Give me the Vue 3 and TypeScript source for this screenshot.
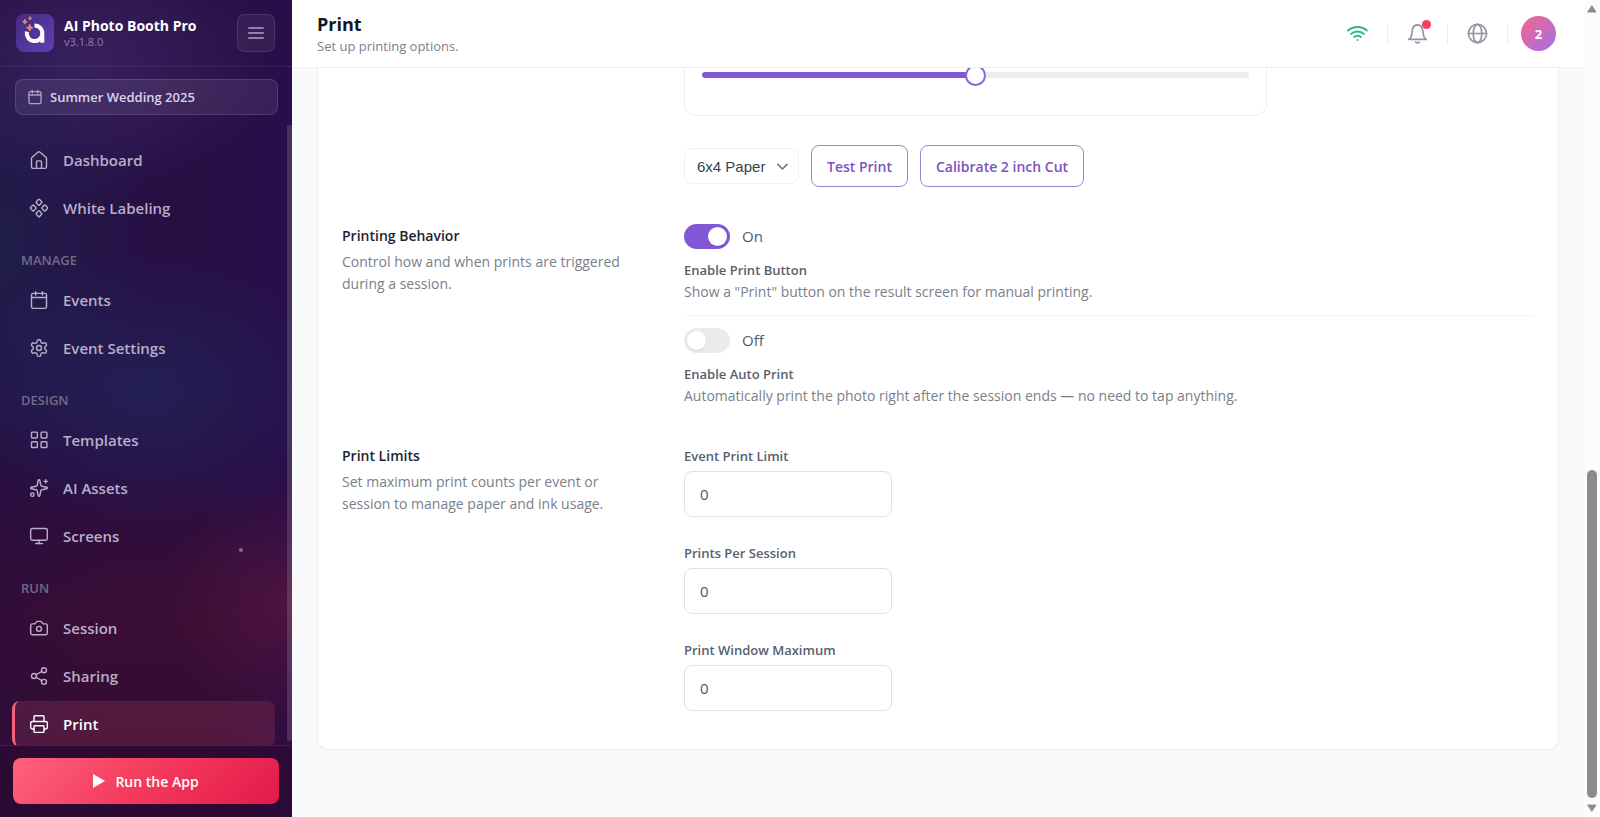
<script setup lang="ts">
import { ref } from 'vue'

interface NavItem {
  label: string
  paths: string[]
}
interface NavGroup {
  title?: string
  items: NavItem[]
}

const calendar = ['M8 2v4', 'M16 2v4', 'M5 4h14a2 2 0 0 1 2 2v14a2 2 0 0 1-2 2H5a2 2 0 0 1-2-2V6a2 2 0 0 1 2-2z', 'M3 9h18']

const groups: NavGroup[] = [
  {
    items: [
      { label: 'Dashboard', paths: ['M3 10.2a2 2 0 0 1 .7-1.5l7-6a2 2 0 0 1 2.6 0l7 6a2 2 0 0 1 .7 1.5V20a2 2 0 0 1-2 2H5a2 2 0 0 1-2-2z', 'M9 22v-8a1 1 0 0 1 1-1h4a1 1 0 0 1 1 1v8'] },
      { label: 'White Labeling', paths: [
        'M11.3 1.9a1 1 0 0 1 1.4 0l2.5 2.5a1 1 0 0 1 0 1.4l-2.5 2.5a1 1 0 0 1-1.4 0L8.8 5.8a1 1 0 0 1 0-1.4z',
        'M11.3 15.7a1 1 0 0 1 1.4 0l2.5 2.5a1 1 0 0 1 0 1.4l-2.5 2.5a1 1 0 0 1-1.4 0l-2.5-2.5a1 1 0 0 1 0-1.4z',
        'M4.4 8.8a1 1 0 0 1 1.4 0l2.5 2.5a1 1 0 0 1 0 1.4l-2.5 2.5a1 1 0 0 1-1.4 0l-2.5-2.5a1 1 0 0 1 0-1.4z',
        'M18.2 8.8a1 1 0 0 1 1.4 0l2.5 2.5a1 1 0 0 1 0 1.4l-2.5 2.5a1 1 0 0 1-1.4 0l-2.5-2.5a1 1 0 0 1 0-1.4z',
      ] },
    ],
  },
  {
    title: 'MANAGE',
    items: [
      { label: 'Events', paths: calendar },
      { label: 'Event Settings', paths: [
        'M12.22 2h-.44a2 2 0 0 0-2 2v.18a2 2 0 0 1-1 1.73l-.43.25a2 2 0 0 1-2 0l-.15-.08a2 2 0 0 0-2.73.73l-.22.38a2 2 0 0 0 .73 2.73l.15.1a2 2 0 0 1 1 1.72v.51a2 2 0 0 1-1 1.74l-.15.09a2 2 0 0 0-.73 2.73l.22.38a2 2 0 0 0 2.73.73l.15-.08a2 2 0 0 1 2 0l.43.25a2 2 0 0 1 1 1.73V20a2 2 0 0 0 2 2h.44a2 2 0 0 0 2-2v-.18a2 2 0 0 1 1-1.73l.43-.25a2 2 0 0 1 2 0l.15.08a2 2 0 0 0 2.73-.73l.22-.39a2 2 0 0 0-.73-2.73l-.15-.08a2 2 0 0 1-1-1.74v-.5a2 2 0 0 1 1-1.74l.15-.09a2 2 0 0 0 .73-2.73l-.22-.38a2 2 0 0 0-2.73-.73l-.15.08a2 2 0 0 1-2 0l-.43-.25a2 2 0 0 1-1-1.73V4a2 2 0 0 0-2-2z',
        'M9 12a3 3 0 1 0 6 0a3 3 0 1 0-6 0',
      ] },
    ],
  },
  {
    title: 'DESIGN',
    items: [
      { label: 'Templates', paths: [
        'M4 2.500h5a1 1 0 0 1 1 1v5a1 1 0 0 1-1 1H4a1 1 0 0 1-1-1v-5a1 1 0 0 1 1-1z',
        'M15.500 2.500h5a1 1 0 0 1 1 1v5a1 1 0 0 1-1 1h-5a1 1 0 0 1-1-1v-5a1 1 0 0 1 1-1z',
        'M15.500 14h5a1 1 0 0 1 1 1v5a1 1 0 0 1-1 1h-5a1 1 0 0 1-1-1v-5a1 1 0 0 1 1-1z',
        'M4 14h5a1 1 0 0 1 1 1v5a1 1 0 0 1-1 1H4a1 1 0 0 1-1-1v-5a1 1 0 0 1 1-1z',
      ] },
      { label: 'AI Assets', paths: ['M11.017 2.814a1 1 0 0 1 1.966 0l1.051 5.558a2 2 0 0 0 1.594 1.594l5.558 1.051a1 1 0 0 1 0 1.966l-5.558 1.051a2 2 0 0 0-1.594 1.594l-1.051 5.558a1 1 0 0 1-1.966 0l-1.051-5.558a2 2 0 0 0-1.594-1.594l-5.558-1.051a1 1 0 0 1 0-1.966l5.558-1.051a2 2 0 0 0 1.594-1.594z', 'M20 2v4', 'M22 4h-4', 'M2 20a2 2 0 1 0 4 0a2 2 0 1 0-4 0'] },
      { label: 'Screens', paths: ['M4 3h16a2 2 0 0 1 2 2v10a2 2 0 0 1-2 2H4a2 2 0 0 1-2-2V5a2 2 0 0 1 2-2z', 'M8 21h8', 'M12 17v4'] },
    ],
  },
  {
    title: 'RUN',
    items: [
      { label: 'Session', paths: ['M14.500 4h-5L7 7H4a2 2 0 0 0-2 2v9a2 2 0 0 0 2 2h16a2 2 0 0 0 2-2V9a2 2 0 0 0-2-2h-3z', 'M9 13a3 3 0 1 0 6 0a3 3 0 1 0-6 0'] },
      { label: 'Sharing', paths: ['M15 5a3 3 0 1 0 6 0a3 3 0 1 0-6 0', 'M3 12a3 3 0 1 0 6 0a3 3 0 1 0-6 0', 'M15 19a3 3 0 1 0 6 0a3 3 0 1 0-6 0', 'M8.590 13.510l6.830 3.980', 'M15.410 6.510l-6.820 3.980'] },
      { label: 'Print', paths: ['M6 18H4a2 2 0 0 1-2-2v-5a2 2 0 0 1 2-2h16a2 2 0 0 1 2 2v5a2 2 0 0 1-2 2h-2', 'M6 9V3a1 1 0 0 1 1-1h10a1 1 0 0 1 1 1v6', 'M7 14h10a1 1 0 0 1 1 1v6a1 1 0 0 1-1 1H7a1 1 0 0 1-1-1v-6a1 1 0 0 1 1-1z'] },
    ],
  },
]

const active = ref('Print')
const scale = ref(50)
const paper = ref('6x4 Paper')

const toggles = ref([
  { id: 'print-button', label: 'Enable Print Button', text: 'Show a "Print" button on the result screen for manual printing.', on: true },
  { id: 'auto-print', label: 'Enable Auto Print', text: 'Automatically print the photo right after the session ends — no need to tap anything.', on: false },
])

const limits = ref([
  { id: 'event-limit', label: 'Event Print Limit', value: '0' },
  { id: 'session-limit', label: 'Prints Per Session', value: '0' },
  { id: 'window-limit', label: 'Print Window Maximum', value: '0' },
])
</script>

<template>
  <div class="app">
    <aside class="sidebar">
      <div class="brand">
        <svg class="logo" viewBox="0 0 38 38" aria-hidden="true">
          <defs>
            <linearGradient id="logo-bg" x1="0" y1="0" x2="1" y2="1">
              <stop offset="0" stop-color="#452b80" />
              <stop offset="1" stop-color="#5f3fb4" />
            </linearGradient>
          </defs>
          <rect class="logo-tile" width="38" height="38" rx="8" />
          <path class="logo-ring" d="M18.500 11.500a7.800 7.800 0 1 1-7.600 6.200M26.300 19.300v9.400" />
          <path class="logo-star" d="M13.800 10.600l1 2.200 2.200 1-2.200 1-1 2.200-1-2.200-2.200-1 2.200-1zM8.800 5.500l.7 1.600 1.600.7-1.600.7-.7 1.600-.7-1.600-1.600-.7 1.600-.7zM14 2.900l.5 1 1 .5-1 .5-.5 1-.5-1-1-.5 1-.5z" />
        </svg>
        <div class="brand-text">
          <strong>AI Photo Booth Pro</strong>
          <span>v3.1.8.0</span>
        </div>
        <button class="menu" type="button" aria-label="Toggle menu">
          <svg viewBox="0 0 18 18"><path d="M2 4h14M2 9h14M2 14h14" /></svg>
        </button>
      </div>

      <button class="event" type="button">
        <svg viewBox="0 0 24 24"><path v-for="p in calendar" :key="p" :d="p" /></svg>
        <span>Summer Wedding 2025</span>
      </button>

      <nav class="nav">
        <div v-for="(group, i) in groups" :key="i" class="group">
          <h2 v-if="group.title">{{ group.title }}</h2>
          <a
            v-for="item in group.items"
            :key="item.label"
            href="#"
            :class="{ active: item.label === active }"
            @click.prevent="active = item.label"
          >
            <svg viewBox="0 0 24 24"><path v-for="p in item.paths" :key="p" :d="p" /></svg>
            <span>{{ item.label }}</span>
          </a>
        </div>
        <span class="nav-thumb"></span>
        <span class="spark"></span>
      </nav>

      <div class="run">
        <button type="button">
          <svg viewBox="0 0 12 14"><path d="M0 0l12 7-12 7z" /></svg>
          <span>Run the App</span>
        </button>
      </div>
    </aside>

    <div class="main">
      <header class="topbar">
        <div class="heading">
          <h1>Print</h1>
          <p>Set up printing options.</p>
        </div>
        <div class="actions">
          <button type="button" class="wifi" aria-label="Network">
            <svg viewBox="0 0 22 18">
              <path d="M1.200 5.800a15 15 0 0 1 19.600 0M4.300 9.300a10.500 10.500 0 0 1 13.400 0M7.500 12.600a5.700 5.700 0 0 1 7 0" />
              <circle cx="11" cy="15.800" r="1" />
            </svg>
          </button>
          <button type="button" class="bell" aria-label="Notifications">
            <svg viewBox="0 0 22 22">
              <path d="M1.800 17.200c2-1.200 3-3 3.200-6.200C5.200 6 6.500 2 11 2s5.800 4 6 9c.2 3.200 1.200 5 3.200 6.200zM9 20c1 1 3 1 4 0" />
            </svg>
            <span class="dot"></span>
          </button>
          <button type="button" aria-label="Language">
            <svg viewBox="0 0 22 22">
              <circle cx="11" cy="11" r="9.500" />
              <ellipse cx="11" cy="11" rx="4.500" ry="9.500" />
              <path d="M1.500 11h19" />
            </svg>
          </button>
          <button type="button" class="avatar">2</button>
        </div>
      </header>

      <main class="content">
        <div class="card">
          <section class="row">
            <div class="side"></div>
            <div class="body">
              <div class="slider-box">
                <input v-model="scale" type="range" min="0" max="100" aria-label="Print scale" />
              </div>
              <div class="tools">
                <div class="select">
                  <select v-model="paper" aria-label="Paper size">
                    <option>6x4 Paper</option>
                  </select>
                  <svg viewBox="0 0 12 8"><path d="M1 1.500l5 5 5-5" /></svg>
                </div>
                <button type="button">Test Print</button>
                <button type="button">Calibrate 2 inch Cut</button>
              </div>
            </div>
          </section>

          <section class="row">
            <div class="side">
              <h3>Printing Behavior</h3>
              <p>Control how and when prints are triggered during a session.</p>
            </div>
            <div class="body">
              <div v-for="t in toggles" :key="t.id" class="toggle">
                <div class="switch">
                  <input :id="t.id" v-model="t.on" type="checkbox" role="switch" />
                  <span>{{ t.on ? 'On' : 'Off' }}</span>
                </div>
                <label :for="t.id">{{ t.label }}</label>
                <p>{{ t.text }}</p>
              </div>
            </div>
          </section>

          <section class="row">
            <div class="side">
              <h3>Print Limits</h3>
              <p>Set maximum print counts per event or session to manage paper and ink usage.</p>
            </div>
            <div class="body limits">
              <div v-for="l in limits" :key="l.id" class="field">
                <label :for="l.id">{{ l.label }}</label>
                <input :id="l.id" v-model="l.value" type="text" inputmode="numeric" />
              </div>
            </div>
          </section>
        </div>
      </main>
    </div>

    <div class="scrollbar" aria-hidden="true">
      <svg viewBox="0 0 10 8"><path d="M5 1l4 6H1z" /></svg>
      <div class="track"><span></span></div>
      <svg viewBox="0 0 10 8"><path d="M5 7l4-6H1z" /></svg>
    </div>
  </div>
</template>

<style>
body {
  margin: 0;
}
</style>

<style scoped>
* {
  box-sizing: border-box;
}
.app {
  display: flex;
  height: 100vh;
  overflow: hidden;
  font-family: 'Open Sans', 'Noto Sans', sans-serif;
  background: #f9fafc;
  color: #374151;
}
h1, h2, h3, p {
  margin: 0;
}
button {
  font-family: inherit;
  cursor: pointer;
}
svg {
  display: block;
  fill: none;
  stroke: currentColor;
  stroke-linecap: round;
  stroke-linejoin: round;
}

/* Sidebar */
.sidebar {
  flex: none;
  width: 292px;
  display: flex;
  flex-direction: column;
  color: #b9adc9;
  background:
    radial-gradient(ellipse 130px 120px at 100% 74%, rgba(110, 28, 62, 0.42), transparent),
    radial-gradient(ellipse 200px 140px at 50% 48%, rgba(32, 46, 98, 0.55), transparent),
    radial-gradient(ellipse 150px 230px at 0 30%, rgba(28, 40, 82, 0.6), transparent),
    radial-gradient(ellipse 190px 130px at 28% 8%, rgba(66, 42, 112, 0.65), transparent),
    linear-gradient(90deg, rgba(38, 14, 62, 0.4), transparent 40%, transparent 70%, rgba(42, 14, 88, 0.35)),
    linear-gradient(180deg, #281044 0, #270f45 45%, #2a0d42 58%, #3a0d35 75%, #300b32 100%);
}
.brand {
  display: flex;
  align-items: center;
  gap: 10px;
  height: 67px;
  padding: 0 17px 0 16px;
  border-bottom: 1px solid rgba(255, 255, 255, 0.07);
}
.logo {
  width: 38px;
  height: 38px;
  stroke: none;
}
.logo-tile {
  fill: url(#logo-bg);
}
.logo-ring {
  stroke: #fff;
  stroke-width: 4;
  stroke-linecap: butt;
}
.logo-star {
  fill: #e98a5c;
  stroke: #e98a5c;
  stroke-width: 1;
}
.brand-text {
  flex: 1;
  display: flex;
  flex-direction: column;
}
.brand-text strong {
  font-size: 14px;
  line-height: 18px;
  font-weight: 700;
  color: #fff;
  white-space: nowrap;
}
.brand-text span {
  font-size: 11px;
  line-height: 14px;
  color: #8f80a5;
}
.menu {
  width: 38px;
  height: 38px;
  display: grid;
  place-items: center;
  padding: 0;
  border: 1px solid rgba(255, 255, 255, 0.1);
  border-radius: 8px;
  background: rgba(255, 255, 255, 0.06);
  color: #9283a6;
}
.menu svg {
  width: 18px;
  stroke-width: 2;
}
.event {
  display: flex;
  align-items: center;
  gap: 7px;
  height: 36px;
  margin: 12px 14px 10px 15px;
  padding: 0 11px;
  border: 1px solid rgba(255, 255, 255, 0.12);
  border-radius: 8px;
  background: rgba(255, 255, 255, 0.08);
  color: #dcd3e6;
  font-size: 13px;
  font-weight: 600;
}
.event svg {
  width: 16px;
  height: 16px;
  stroke-width: 2;
  opacity: 0.7;
}
.nav {
  position: relative;
  flex: 1;
  min-height: 0;
  overflow: hidden;
  padding: 12px 17px 0 12px;
}
.nav-thumb {
  position: absolute;
  right: 0;
  top: 0;
  bottom: 4px;
  width: 5px;
  border-radius: 2px;
  background: rgba(255, 255, 255, 0.14);
}
.spark {
  position: absolute;
  left: 239px;
  top: 423px;
  width: 4px;
  height: 4px;
  border-radius: 50%;
  background: #8b6592;
}
.group {
  display: flex;
  flex-direction: column;
  gap: 2px;
}
.group h2 {
  padding: 20px 9px 6px;
  font-size: 13px;
  line-height: 18px;
  font-weight: 600;
  color: #756888;
}
.group a {
  display: flex;
  align-items: center;
  gap: 14px;
  height: 46px;
  padding: 0 14px;
  border-left: 3px solid transparent;
  border-radius: 8px;
  color: #b9adc9;
  font-size: 15px;
  font-weight: 600;
  text-decoration: none;
}
.group svg {
  width: 20px;
  height: 20px;
  stroke-width: 1.700;
}
.group a.active {
  border-left-color: #f4607a;
  background: rgba(160, 60, 90, 0.28);
  color: #fff;
}
.run {
  padding: 12px 13px 13px;
  border-top: 1px solid rgba(255, 255, 255, 0.1);
  background: rgba(40, 8, 44, 0.4);
}
.run button {
  display: flex;
  align-items: center;
  justify-content: center;
  gap: 10px;
  width: 100%;
  height: 46px;
  border: 0;
  border-radius: 8px;
  background: linear-gradient(135deg, #fd637b, #f43a5c 50%, #e2194a);
  color: #fff;
  font-size: 14px;
  font-weight: 600;
}
.run svg {
  width: 12px;
  height: 14px;
  fill: #fff;
  stroke: none;
}

/* Header */
.main {
  flex: 1;
  min-width: 0;
  display: flex;
  flex-direction: column;
}
.topbar {
  position: relative;
  z-index: 1;
  flex: none;
  display: flex;
  align-items: center;
  justify-content: space-between;
  height: 68px;
  padding: 0 28px 0 25px;
  border-bottom: 1px solid #eef0f3;
  background: #fff;
}
h1 {
  font-size: 18px;
  line-height: 24px;
  font-weight: 700;
  color: #111827;
}
.heading p {
  font-size: 13px;
  line-height: 20px;
  color: #7b818c;
}
.actions {
  display: flex;
  align-items: center;
}
.actions button {
  position: relative;
  display: grid;
  place-items: center;
  width: 60px;
  height: 20px;
  padding: 0;
  border: 0;
  border-right: 1px solid #e9ebee;
  background: none;
  color: #9095a1;
}
.actions svg {
  width: 21px;
  stroke-width: 1.700;
}
.actions .wifi {
  color: #2fb47c;
}
.wifi svg {
  stroke-width: 2;
}
.wifi circle {
  fill: currentColor;
  stroke: none;
}
.dot {
  position: absolute;
  left: 34px;
  top: -4px;
  width: 9px;
  height: 9px;
  border-radius: 50%;
  background: #f43f5e;
}
.actions .avatar {
  width: 35px;
  height: 35px;
  margin-left: 13px;
  border: 0;
  border-radius: 50%;
  background: linear-gradient(135deg, #f8658a, #a070e6);
  color: #fff;
  font-size: 13px;
  font-weight: 700;
}

/* Content */
.content {
  flex: 1;
  min-height: 0;
  overflow: hidden;
  padding: 0 25px;
}
.card {
  display: flex;
  flex-direction: column;
  gap: 37px;
  padding: 0 24px 38px;
  border: 1px solid #eef0f3;
  border-top: 0;
  border-radius: 0 0 12px 12px;
  background: #fff;
  box-shadow: 0 1px 2px rgba(16, 24, 40, 0.04);
}
.row {
  display: flex;
  gap: 48px;
}
.side {
  flex: none;
  width: 294px;
}
.body {
  flex: 1;
  min-width: 0;
}
h3 {
  font-size: 14px;
  line-height: 24px;
  font-weight: 600;
  color: #1b2230;
}
.side p,
.toggle p {
  font-size: 14px;
  line-height: 22px;
  color: #7a808b;
}
.side p {
  margin-top: 3px;
}
.slider-box {
  max-width: 583px;
  padding: 4px 17px 37px;
  border: 1px solid #eff0f2;
  border-top: 0;
  border-radius: 0 0 12px 12px;
}
.slider-box input {
  display: block;
  appearance: none;
  width: 100%;
  height: 6px;
  margin: 0;
  border-radius: 3px;
  background: linear-gradient(90deg, #8257d6 50%, #ececee 50%);
}
.slider-box input::-webkit-slider-thumb {
  appearance: none;
  width: 21px;
  height: 21px;
  border: 2px solid #8a68cf;
  border-radius: 50%;
  background: #fff;
}
.tools {
  display: flex;
  align-items: center;
  gap: 12px;
  margin-top: 29px;
}
.tools button {
  height: 42px;
  padding: 0 15px;
  border: 1px solid #9d85d3;
  border-radius: 8px;
  background: #fff;
  color: #7b53c1;
  font-size: 14px;
  font-weight: 600;
}
.select {
  position: relative;
}
.select select {
  appearance: none;
  height: 36px;
  width: 115px;
  padding: 0 12px;
  border: 1px solid #eff0f2;
  border-radius: 8px;
  background: #fff;
  color: #374151;
  font-family: 'Liberation Sans', Arial, sans-serif;
  font-size: 15px;
}
.select svg {
  position: absolute;
  right: 11px;
  top: 15px;
  width: 11px;
  stroke-width: 1.600;
  color: #6b7280;
  pointer-events: none;
}
.toggle + .toggle {
  margin-top: 12px;
  padding-top: 12px;
  border-top: 1px solid #f3f4f6;
}
.switch {
  display: flex;
  align-items: center;
  gap: 12px;
  font-size: 15px;
  line-height: 25px;
  color: #565c66;
}
.switch input {
  appearance: none;
  width: 46px;
  height: 25px;
  margin: 0;
  padding: 3px;
  border-radius: 13px;
  background: #ebebee;
}
.switch input::before {
  content: '';
  display: block;
  width: 19px;
  height: 19px;
  border-radius: 50%;
  background: #fff;
  box-shadow: 0 1px 2px rgba(0, 0, 0, 0.12);
}
.switch input:checked {
  background: #8257d6;
}
.switch input:checked::before {
  margin-left: auto;
}
label {
  display: block;
  font-size: 13px;
  line-height: 18px;
  font-weight: 600;
  color: #58606c;
}
.toggle label {
  margin: 12px 0 2px;
}
.limits {
  display: flex;
  flex-direction: column;
  gap: 24px;
}
.field label {
  margin: 3px 0 6px;
}
.field input {
  display: block;
  width: 208px;
  height: 46px;
  padding: 0 15px;
  border: 1px solid #dfe1e5;
  border-radius: 8px;
  background: #fff;
  color: #4b5563;
  font-family: inherit;
  font-size: 15px;
}

/* Page scrollbar */
.scrollbar {
  flex: none;
  width: 16px;
  display: flex;
  flex-direction: column;
  align-items: center;
  padding: 5px 0;
  background: #fcfcfc;
}
.scrollbar svg {
  width: 10px;
  height: 8px;
  fill: #8b8b8b;
  stroke: #8b8b8b;
}
.track {
  flex: 1;
  width: 10px;
  margin: 5px 0 6px;
  display: flex;
  align-items: flex-end;
}
.track span {
  width: 100%;
  height: 42%;
  border-radius: 5px;
  background: #8b8b8b;
}
</style>
